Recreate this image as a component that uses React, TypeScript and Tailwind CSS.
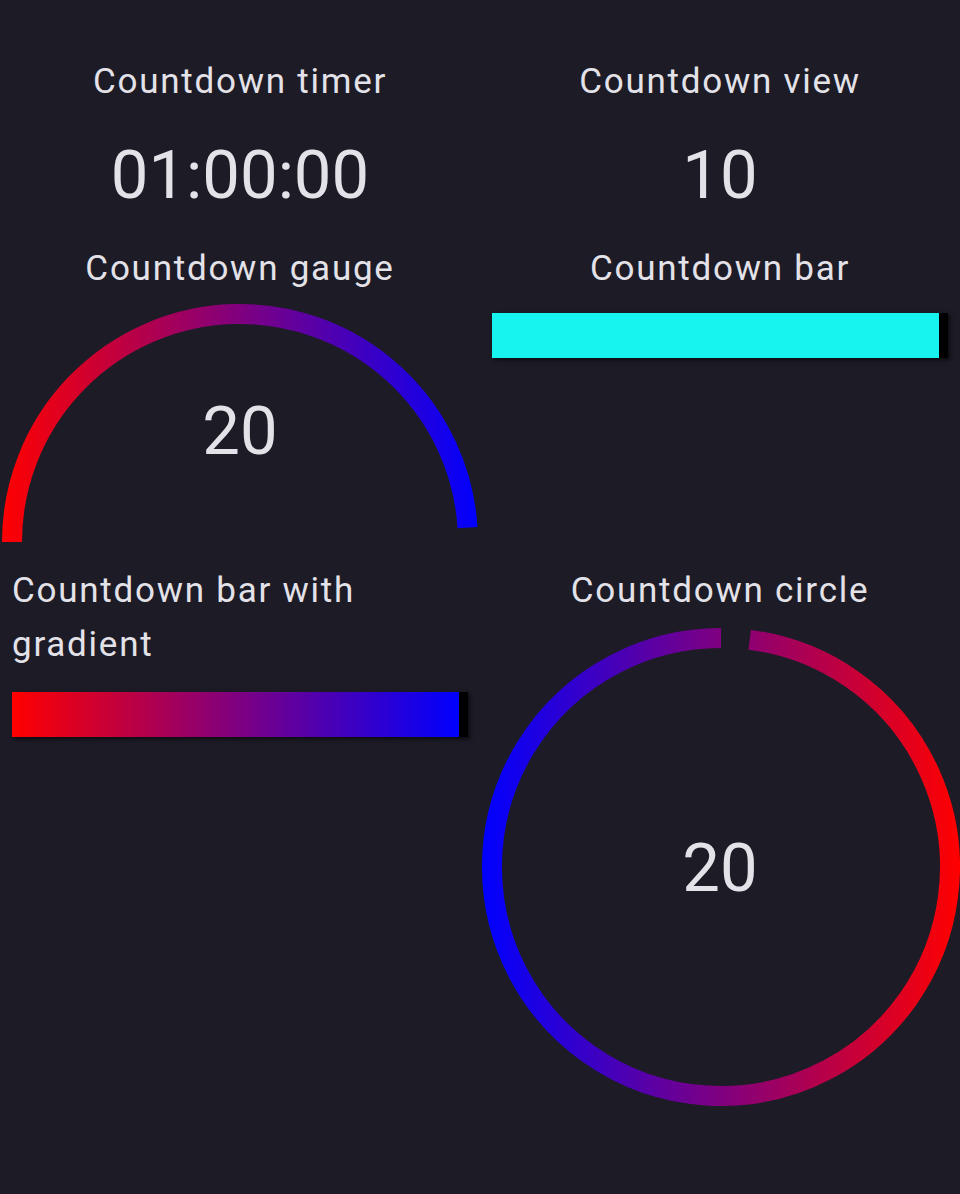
import React from "react";

const P = 0.98;

function Gauge() {
  const cx = 240;
  const cy = 246;
  const r = 228;
  const a = Math.PI + Math.PI * P;
  const ex = cx + r * Math.cos(a);
  const ey = cy + r * Math.sin(a);
  const d = `M ${cx - r} ${cy} A ${r} ${r} 0 0 1 ${ex.toFixed(2)} ${ey.toFixed(2)}`;
  return (
    <div className="relative h-[250px] w-[480px]">
      <svg width="480" height="250" viewBox="0 0 480 250" className="block">
        <defs>
          <linearGradient id="gaugeGrad" gradientUnits="userSpaceOnUse" x1="0" y1="0" x2="480" y2="0">
            <stop offset="0" stopColor="#ff0000" />
            <stop offset="1" stopColor="#0000ff" />
          </linearGradient>
        </defs>
        <path d={d} fill="none" stroke="url(#gaugeGrad)" strokeWidth="20" strokeLinecap="butt" />
      </svg>
      <div className="absolute left-0 top-[95px] w-full text-center text-[67px] leading-[80px]">20</div>
    </div>
  );
}

function Circle() {
  const cx = 241;
  const cy = 249;
  const r = 229;
  const t0 = 2 * Math.PI * (1 - P);
  const sx = cx + r * Math.sin(t0);
  const sy = cy - r * Math.cos(t0);
  const d = `M ${sx.toFixed(2)} ${sy.toFixed(2)} A ${r} ${r} 0 1 1 ${cx} ${cy - r}`;
  return (
    <div className="relative h-[500px] w-[480px]">
      <svg width="480" height="500" viewBox="0 0 480 500" className="block">
        <defs>
          <linearGradient id="circleGrad" gradientUnits="userSpaceOnUse" x1="2" y1="0" x2="480" y2="0">
            <stop offset="0" stopColor="#0000ff" />
            <stop offset="1" stopColor="#ff0000" />
          </linearGradient>
        </defs>
        <path d={d} fill="none" stroke="url(#circleGrad)" strokeWidth="20" strokeLinecap="butt" />
      </svg>
      <div className="absolute left-0 top-[210px] w-full text-center text-[67px] leading-[80px]">20</div>
    </div>
  );
}

export default function App() {
  return (
    <div
      className="min-h-[1194px] w-[960px] bg-[#1c1b26] text-[#e4e2e9]"
      style={{ fontFamily: "Roboto, 'Noto Sans', sans-serif" }}
    >
      <div className="grid grid-cols-2">
        {/* Row 1 */}
        <div className="flex flex-col items-center pt-[55px]">
          <div className="text-[35px] leading-[54px] tracking-[0.05em]">Countdown timer</div>
          <div className="text-[67px] leading-[133px]">01:00:00</div>
        </div>
        <div className="flex flex-col items-center pt-[55px]">
          <div className="text-[35px] leading-[54px] tracking-[0.05em]">Countdown view</div>
          <div className="text-[67px] leading-[133px]">10</div>
        </div>

        {/* Row 2 */}
        <div className="flex flex-col items-center">
          <div className="text-[35px] leading-[54px] tracking-[0.05em]">Countdown gauge</div>
          <Gauge />
        </div>
        <div className="flex flex-col items-center">
          <div className="text-[35px] leading-[54px] tracking-[0.05em]">Countdown bar</div>
          <div className="mt-[17px] flex h-[45px] w-[456px] bg-black shadow-[2px_2px_4px_rgba(0,0,0,0.6)]">
            <div className="h-full w-[98%] bg-[#17f4f0]" />
          </div>
        </div>

        {/* Row 3 */}
        <div className="flex flex-col pt-[18px]">
          <div className="px-3 text-[35px] leading-[54px] tracking-[0.05em]">Countdown bar with gradient</div>
          <div className="mx-3 mt-[20px] flex h-[45px] w-[456px] bg-black shadow-[2px_2px_4px_rgba(0,0,0,0.6)]">
            <div className="h-full w-[98%] bg-[linear-gradient(to_right,#ff0000,#0000ff)]" />
          </div>
        </div>
        <div className="flex flex-col items-center pt-[18px]">
          <div className="text-[35px] leading-[54px] tracking-[0.05em]">Countdown circle</div>
          <Circle />
        </div>
      </div>
    </div>
  );
}
